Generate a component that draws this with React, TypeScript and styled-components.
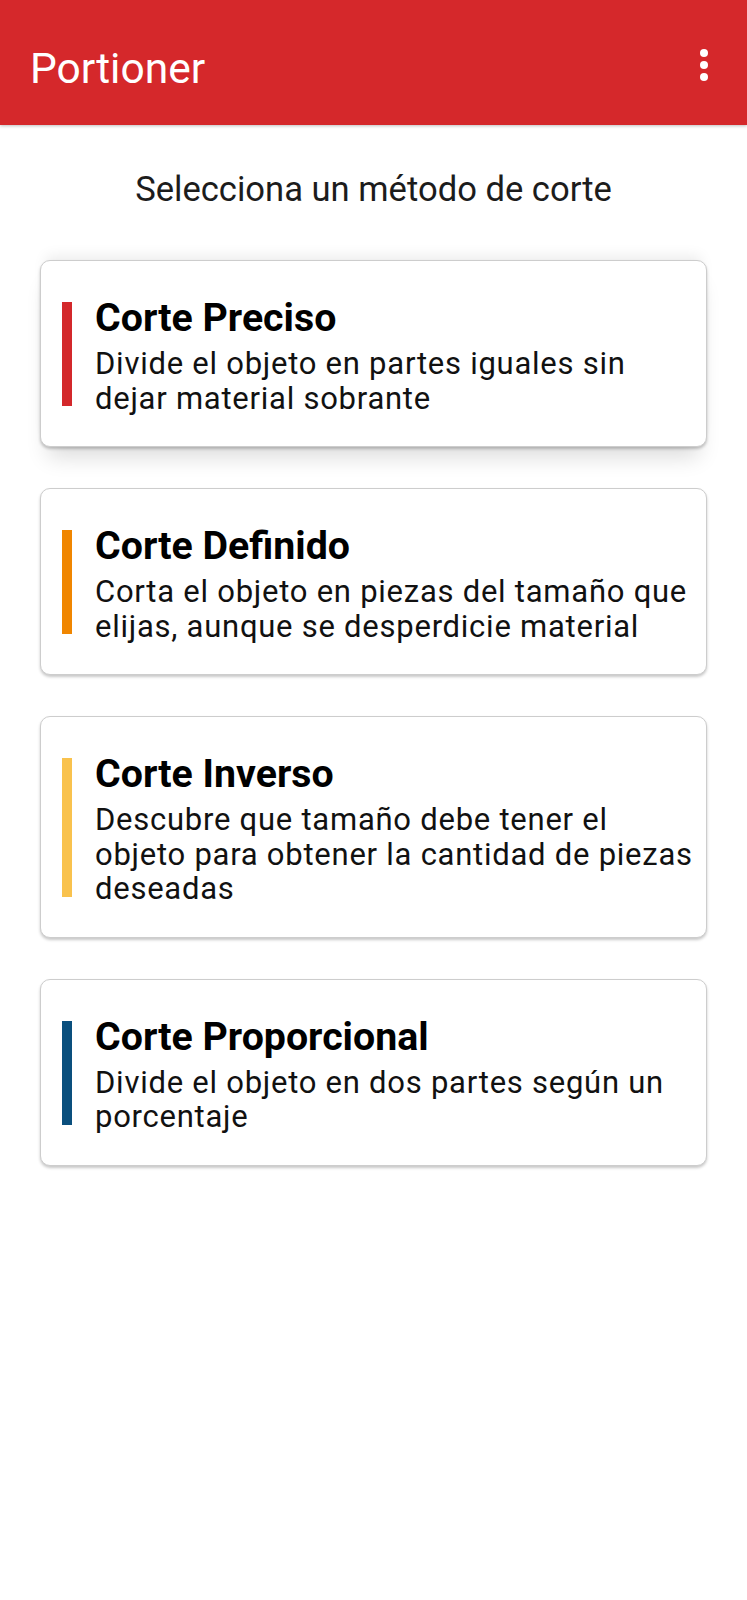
import React from 'react';
import styled, { createGlobalStyle } from 'styled-components';

type Method = {
    title: string;
    description: string;
    color: string;
}

const methods: Method[] = [
    { title: 'Corte Preciso', description: 'Divide el objeto en partes iguales sin dejar material sobrante', color: '#d3282b' },
    { title: 'Corte Definido', description: 'Corta el objeto en piezas del tamaño que elijas, aunque se desperdicie material', color: '#f08600' },
    { title: 'Corte Inverso', description: 'Descubre que tamaño debe tener el objeto para obtener la cantidad de piezas deseadas', color: '#f9c24d' },
    { title: 'Corte Proporcional', description: 'Divide el objeto en dos partes según un porcentaje', color: '#0a4f7d' },
];

const GlobalStyle = createGlobalStyle`
    body {
        margin: 0;
        background: #ffffff;
        font-family: Roboto, "Noto Sans", sans-serif;
    }
`

const Screen = styled.div`
    min-height: 1600px;
    background: #ffffff;
`

const AppBar = styled.header`
    display: flex;
    flex-direction: row;
    align-items: center;
    justify-content: space-between;
    height: 125px;
    padding: 0 31px 0 30px;
    box-sizing: border-box;
    background-color: #d5282b;
    box-shadow: 0 1px 3px rgba(0, 0, 0, 0.25);
`

const AppTitle = styled.h1`
    margin: 12px 0 0 0;
    font-size: 42.5px;
    line-height: 43px;
    font-weight: 400;
    color: #ffffff;
`

const MenuButton = styled.button`
    display: flex;
    align-items: center;
    justify-content: center;
    width: 24px;
    height: 40px;
    margin-top: 4px;
    padding: 0;
    border: none;
    background: transparent;
`

const Content = styled.main`
    display: flex;
    flex-direction: column;
    padding: 44px 40px 0 40px;
`

const Heading = styled.p`
    margin: 0 0 50px 0;
    text-align: center;
    font-size: 34.6px;
    line-height: 41px;
    color: #1c1c1c;
`

const List = styled.div`
    display: flex;
    flex-direction: column;
    gap: 41px;
`

const Card = styled.div<{ raised: boolean }>`
    display: flex;
    flex-direction: row;
    padding: 37px 10px 30px 21px;
    border: 1px solid #cdcdcd;
    border-radius: 10px;
    background: #ffffff;
    box-shadow: ${(props) => props.raised
        ? '0 2px 3px rgba(0, 0, 0, 0.22), 0 18px 22px -8px rgba(0, 0, 0, 0.14), 0 -10px 14px -6px rgba(0, 0, 0, 0.08)'
        : '0 2px 3px rgba(0, 0, 0, 0.22)'};
`

const Accent = styled.span<{ color: string }>`
    flex: 0 0 10px;
    margin: 4px 23px 10px 0;
    background-color: ${(props) => props.color};
`

const CardText = styled.div`
    display: flex;
    flex-direction: column;
    gap: 9px;
    min-width: 0;
`

const CardTitle = styled.h2`
    margin: 0;
    font-size: 39.3px;
    line-height: 40px;
    font-weight: 700;
    color: #000000;
`

const CardDescription = styled.p`
    margin: 0;
    font-size: 31px;
    line-height: 34.5px;
    letter-spacing: 0.75px;
    color: #111111;
`

const MoreIcon = () => (
    <svg width="10" height="34" viewBox="0 0 10 34">
        <circle cx="5" cy="5" r="4" fill="#ffffff" />
        <circle cx="5" cy="17" r="4" fill="#ffffff" />
        <circle cx="5" cy="29" r="4" fill="#ffffff" />
    </svg>
)

const App: React.FC = () => {
    return (
        <Screen>
            <GlobalStyle />
            <AppBar>
                <AppTitle>Portioner</AppTitle>
                <MenuButton aria-label="Más opciones"><MoreIcon /></MenuButton>
            </AppBar>
            <Content>
                <Heading>Selecciona un método de corte</Heading>
                <List>
                    {methods.map((method, index) => (
                        <Card key={method.title} raised={index === 0}>
                            <Accent color={method.color} />
                            <CardText>
                                <CardTitle>{method.title}</CardTitle>
                                <CardDescription>{method.description}</CardDescription>
                            </CardText>
                        </Card>
                    ))}
                </List>
            </Content>
        </Screen>
    )
}

export default App;
